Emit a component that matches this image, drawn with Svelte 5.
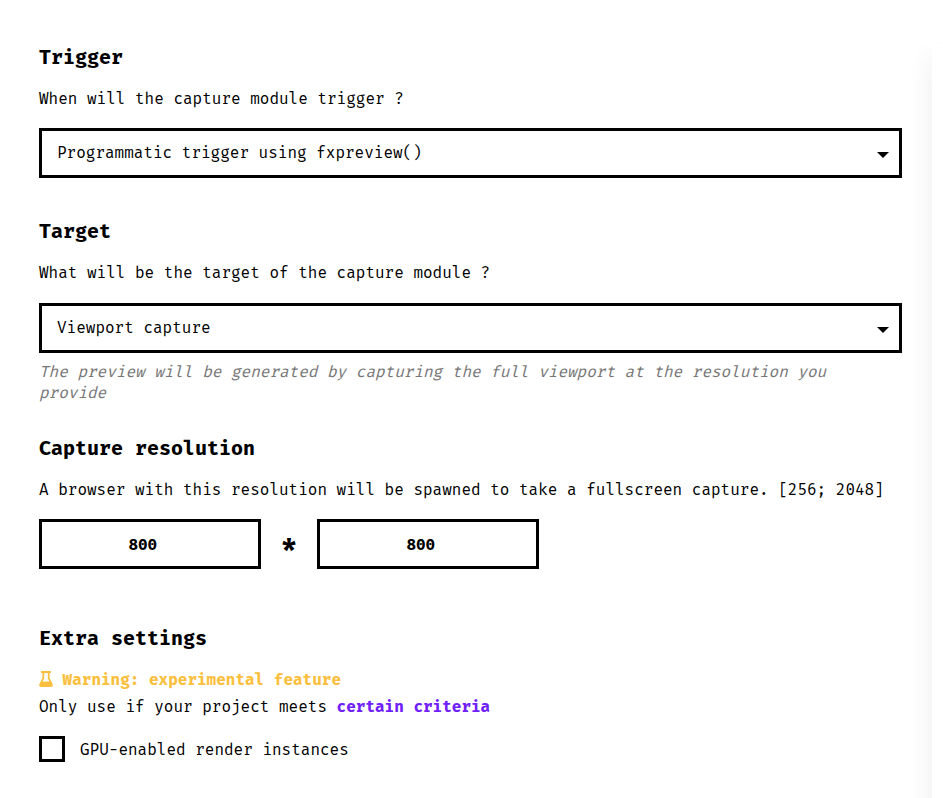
<script>
  let width = $state(800);
  let height = $state(800);
  let gpu = $state(false);
</script>

{#snippet picker(label)}
  <button class="select" type="button">
    <span>{label}</span>
    <svg width="12" height="6" viewBox="0 0 12 6"><path d="M0 0h12L6 6z" /></svg>
  </button>
{/snippet}

<div class="page">
  <main>
    <section class="trigger">
      <h5>Trigger</h5>
      <p>When will the capture module trigger ?</p>
      {@render picker('Programmatic trigger using fxpreview()')}
    </section>

    <section class="target">
      <h5>Target</h5>
      <p>What will be the target of the capture module ?</p>
      {@render picker('Viewport capture')}
      <em>The preview will be generated by capturing the full viewport at the resolution you provide</em>
    </section>

    <section class="resolution">
      <h5>Capture resolution</h5>
      <p>A browser with this resolution will be spawned to take a fullscreen capture. [256; 2048]</p>
      <div class="sizes">
        <input type="text" bind:value={width} />
        <span class="times">*</span>
        <input type="text" bind:value={height} />
      </div>
    </section>

    <section class="extra">
      <h5>Extra settings</h5>
      <div class="warning">
        <svg width="14" height="16" viewBox="0 0 14 16">
          <path fill-rule="evenodd" d="M2.500 0h9q.5 0 .5.500v1q0 .5-.5.500H10.600v4.900l3 6.200c.6 1.400-.2 2.900-1.700 2.900H2.100C.6 16-.2 14.500.4 13.100l3-6.200V2H2.500Q2 2 2 1.500v-1Q2 0 2.500 0zM5.200 2v5.200L3.600 10.600h6.800L8.800 7.200V2z" />
        </svg>
        <strong>Warning: experimental feature</strong>
      </div>
      <div class="criteria">Only use if your project meets <strong>certain criteria</strong></div>
      <label>
        <input type="checkbox" bind:checked={gpu} />
        <span>GPU-enabled render instances</span>
      </label>
    </section>
  </main>
  <aside></aside>
</div>

<style>
  :global(body) {
    background: #fff;
    overflow: hidden;
  }
  .page {
    display: flex;
    height: 798px;
    overflow: hidden;
    font: 16px/21px "Fira Mono", "Fira Code", "DejaVu Sans Mono", monospace;
    color: #000;
  }
  main {
    width: 863px;
    flex: none;
    padding: 42px 30px 0 39px;
  }
  aside {
    flex: 1;
    margin-top: 44px;
    height: 900px;
    background: #fff;
    box-shadow: 0 12px 24px rgba(0, 0, 0, 0.1);
  }
  section {
    display: flex;
    flex-direction: column;
  }
  .trigger { height: 174px; }
  .target { height: 217px; }
  .resolution { height: 190px; }
  h5 {
    margin: 0 0 16px;
    font-size: 20px;
    line-height: 30px;
    font-weight: 700;
  }
  p {
    margin: 0 0 19px;
    white-space: nowrap;
  }
  .target p { margin-bottom: 20px; }
  .select {
    box-sizing: border-box;
    width: 863px;
    height: 50px;
    flex: none;
    display: flex;
    align-items: center;
    justify-content: space-between;
    padding: 0 10px 0 15px;
    border: 3px solid #000;
    background: #fff;
    font: inherit;
    color: inherit;
  }
  .select span { padding-bottom: 2px; }
  .select svg { margin-top: 3px; }
  em {
    width: 820px;
    margin-top: 8px;
    color: #777;
  }
  .sizes {
    display: flex;
    align-items: center;
  }
  .sizes input {
    box-sizing: border-box;
    width: 222px;
    height: 50px;
    padding: 0 29.4px 0 15px;
    border: 3px solid #000;
    border-radius: 0;
    font: inherit;
    font-weight: 700;
    text-align: center;
    outline: none;
  }
  .times {
    width: 56px;
    text-align: center;
    font-size: 30px;
    font-weight: 700;
  }
  .warning {
    display: flex;
    align-items: center;
    gap: 9.6px;
    height: 21px;
    color: #fbbf40;
  }
  .warning svg {
    fill: currentColor;
    margin-top: -2px;
  }
  .criteria { margin-top: 6px; }
  .criteria strong { color: #7020f8; }
  label {
    display: flex;
    align-items: center;
    gap: 15px;
    margin-top: 19px;
  }
  label span { padding-top: 1px; }
  label input {
    appearance: none;
    box-sizing: border-box;
    width: 26px;
    height: 26px;
    margin: 0;
    border: 3px solid #000;
    background: #fff;
  }
</style>
